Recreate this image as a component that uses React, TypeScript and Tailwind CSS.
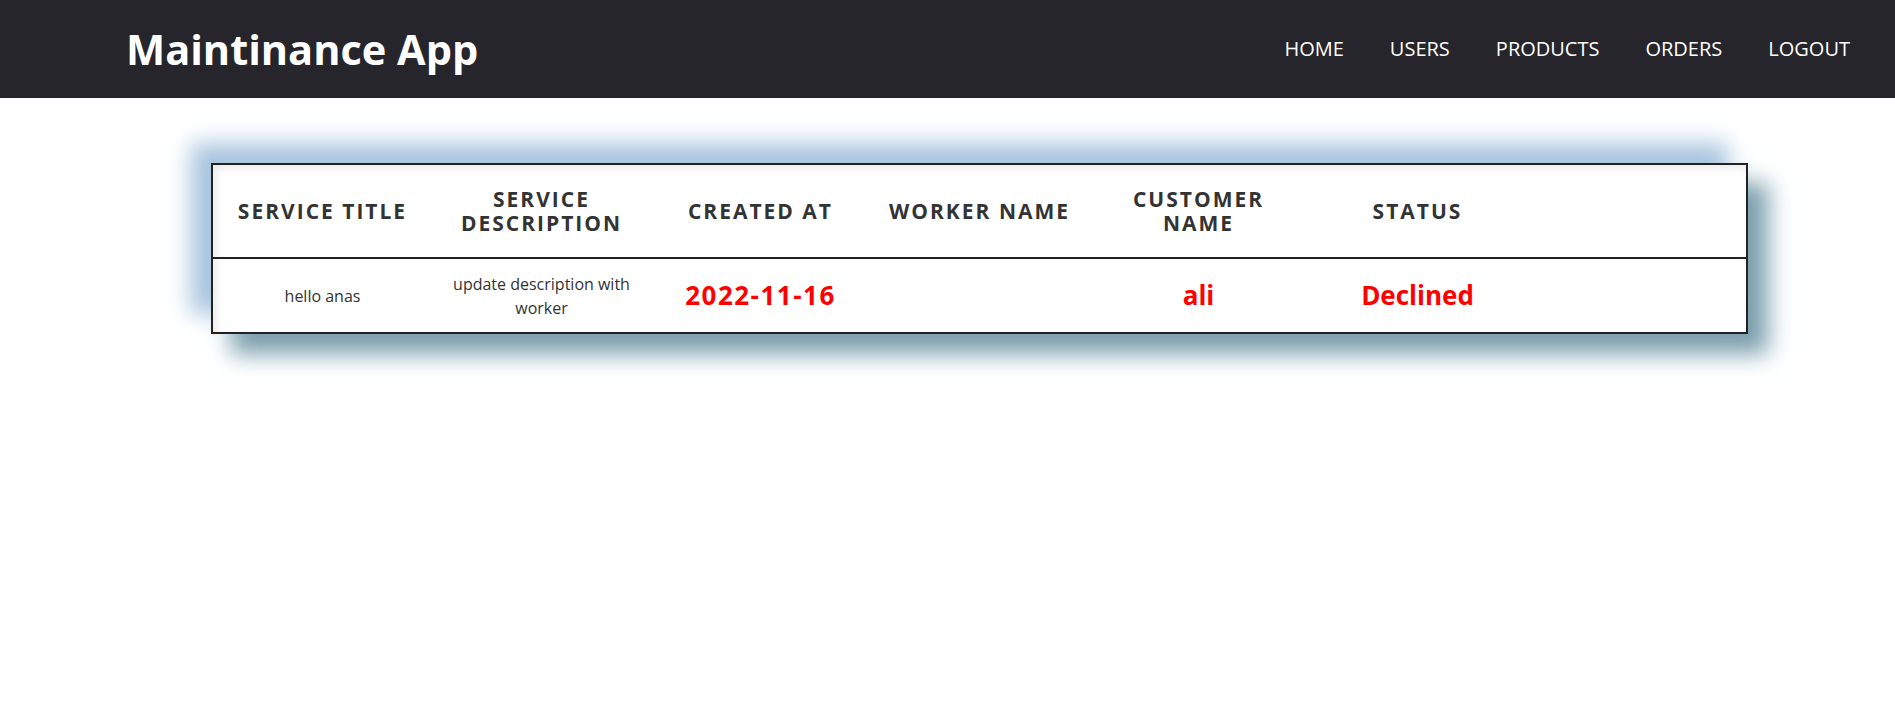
const NAV = ["HOME", "USERS", "PRODUCTS", "ORDERS", "LOGOUT"];

type Order = {
  title: string;
  description: string;
  createdAt: string;
  worker: string;
  customer: string;
  status: string;
};

const ORDERS: Order[] = [
  {
    title: "hello anas",
    description: "update description with worker",
    createdAt: "2022-11-16",
    worker: "",
    customer: "ali",
    status: "Declined",
  },
];

export default function App() {
  return (
    <div className="min-h-screen bg-white font-['Open_Sans',sans-serif]">
      {/* Top bar */}
      <header className="flex h-[98px] items-center justify-between bg-[#26252b] pl-[126px] pr-[22px]">
        <h1 className="text-[41.5px] font-bold text-white">Maintinance App</h1>
        <ul className="flex">
          {NAV.map((item) => (
            <li key={item} className="px-[23px] text-[20px] text-white">
              <a href="#">{item}</a>
            </li>
          ))}
        </ul>
      </header>

      {/* Orders */}
      <div className="pl-[211px] pt-[65px]">
        <div className="w-[1537px] border-2 border-[#222] bg-white shadow-[-20px_-20px_22px_#a8c4df,20px_20px_22px_#7a9fad]">
          <table className="w-full table-fixed border-collapse shadow-[inset_4px_4px_8px_rgba(0,0,0,0.08)]">
            <thead>
              <tr className="h-[93px] border-b-2 border-[#222] text-[21px] font-bold uppercase leading-[24px] tracking-[2px] text-[#333]">
                <th className="px-2">Service Title</th>
                <th className="px-2">Service Description</th>
                <th className="px-2">Created At</th>
                <th className="px-2">Worker Name</th>
                <th className="px-8">Customer Name</th>
                <th className="px-2">Status</th>
                <th />
              </tr>
            </thead>
            <tbody>
              {ORDERS.map((o) => (
                <tr key={o.title} className="h-[74px] text-center">
                  <td className="text-[16px] text-[#333]">{o.title}</td>
                  <td className="px-3 text-[16px] leading-[24px] text-[#333]">
                    {o.description}
                  </td>
                  <td className="text-[26px] font-bold tracking-[1.5px] text-[#ff0000]">
                    {o.createdAt}
                  </td>
                  <td className="text-[26px] font-bold text-[#ff0000]">
                    {o.worker}
                  </td>
                  <td className="text-[26px] font-bold text-[#ff0000]">
                    {o.customer}
                  </td>
                  <td className="text-[26px] font-bold text-[#ff0000]">
                    {o.status}
                  </td>
                  <td />
                </tr>
              ))}
            </tbody>
          </table>
        </div>
      </div>
    </div>
  );
}
